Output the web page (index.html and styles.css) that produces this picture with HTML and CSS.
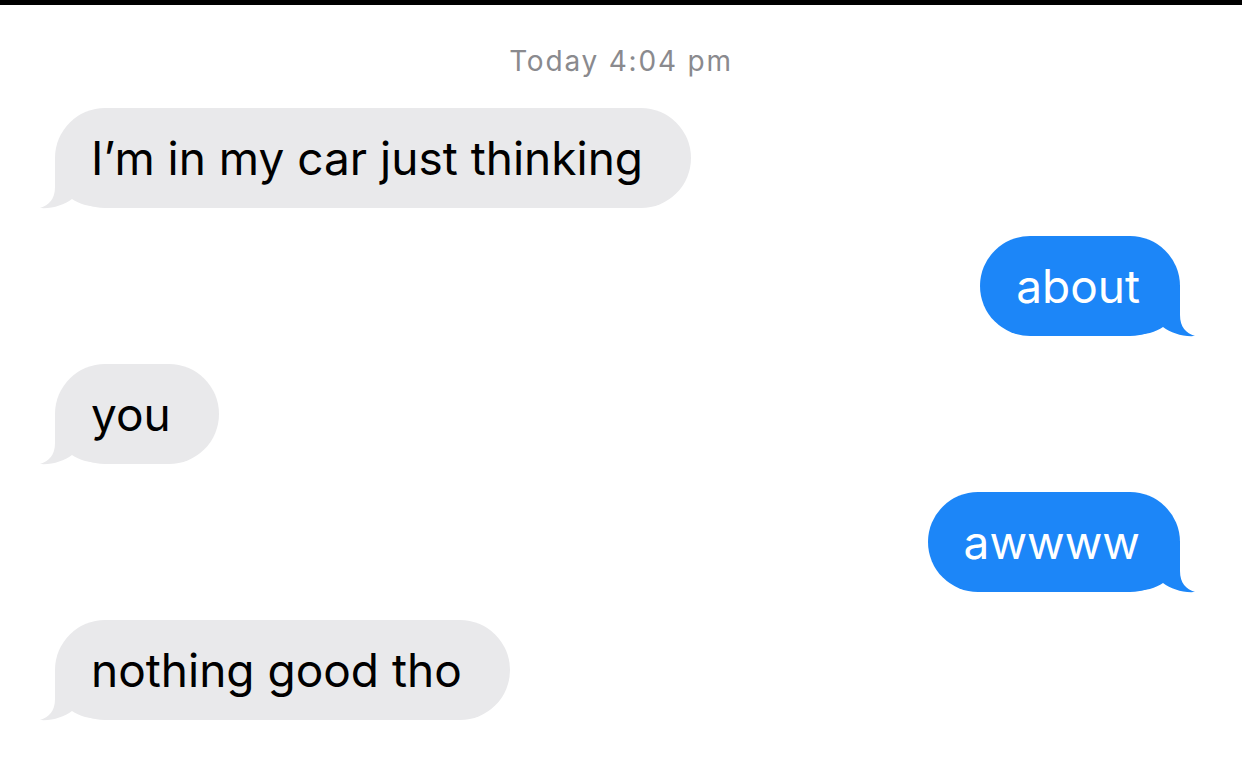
FILE: index.html
```html
<!DOCTYPE html>
<html lang="en">
<head>
<meta charset="utf-8">
<title>Messages</title>
<link rel="stylesheet" href="styles.css">
</head>
<body>
<div class="topbar"></div>
<main class="thread">
  <div class="stamp">Today 4:04 pm</div>
  <div class="row them">
    <div class="bubble">
      <svg class="tail" viewBox="-20 48 72 54" aria-hidden="true"><path d="M0 50 L0 80 C0 92 -6 98 -15 101 C-3 102 9 98 17 92 C24 97 34 100 50 100 L50 50 Z"/></svg>
      <span class="text">I’m in my car just thinking</span>
    </div>
  </div>
  <div class="row me">
    <div class="bubble">
      <svg class="tail" viewBox="-20 48 72 54" aria-hidden="true"><path d="M0 50 L0 80 C0 92 -6 98 -15 101 C-3 102 9 98 17 92 C24 97 34 100 50 100 L50 50 Z"/></svg>
      <span class="text">about</span>
    </div>
  </div>
  <div class="row them">
    <div class="bubble">
      <svg class="tail" viewBox="-20 48 72 54" aria-hidden="true"><path d="M0 50 L0 80 C0 92 -6 98 -15 101 C-3 102 9 98 17 92 C24 97 34 100 50 100 L50 50 Z"/></svg>
      <span class="text">you</span>
    </div>
  </div>
  <div class="row me">
    <div class="bubble">
      <svg class="tail" viewBox="-20 48 72 54" aria-hidden="true"><path d="M0 50 L0 80 C0 92 -6 98 -15 101 C-3 102 9 98 17 92 C24 97 34 100 50 100 L50 50 Z"/></svg>
      <span class="text">awwww</span>
    </div>
  </div>
  <div class="row them">
    <div class="bubble">
      <svg class="tail" viewBox="-20 48 72 54" aria-hidden="true"><path d="M0 50 L0 80 C0 92 -6 98 -15 101 C-3 102 9 98 17 92 C24 97 34 100 50 100 L50 50 Z"/></svg>
      <span class="text">nothing good tho</span>
    </div>
  </div>
</main>
</body>
</html>
```

FILE: styles.css
```css
html, body {
  margin: 0;
  padding: 0;
  background: #ffffff;
}

body {
  font-family: Inter, "Liberation Sans", sans-serif;
  width: 1242px;
  height: 759px;
  overflow: hidden;
}

.topbar {
  height: 5px;
  background: #000;
}

.thread {
  display: flex;
  flex-direction: column;
  gap: 28px;
  padding-top: 40px;
}

.stamp {
  text-align: center;
  font-size: 28px;
  line-height: 32px;
  letter-spacing: 1.8px;
  color: #8a8a8e;
  margin-bottom: 3px;
}

.row {
  display: flex;
}

.row.them {
  justify-content: flex-start;
  padding-left: 55px;
}

.row.me {
  justify-content: flex-end;
  padding-right: 62px;
}

.bubble {
  position: relative;
  isolation: isolate;
  height: 100px;
  line-height: 100px;
  font-size: 46px;
  padding: 0 48px 0 36px;
  border-radius: 50px;
  white-space: nowrap;
}

.text {
  position: relative;
}

.them .bubble {
  background: #e9e9eb;
  color: #000;
}

.me .bubble {
  background: #1c86f8;
  color: #fff;
  padding: 0 40px 0 36px;
}

.tail {
  position: absolute;
  z-index: -1;
  bottom: -1px;
  width: 72px;
  height: 54px;
  left: -20px;
}

.them .tail {
  fill: #e9e9eb;
}

.me .tail {
  fill: #1c86f8;
  left: auto;
  right: -20px;
  transform: scaleX(-1);
}
```
